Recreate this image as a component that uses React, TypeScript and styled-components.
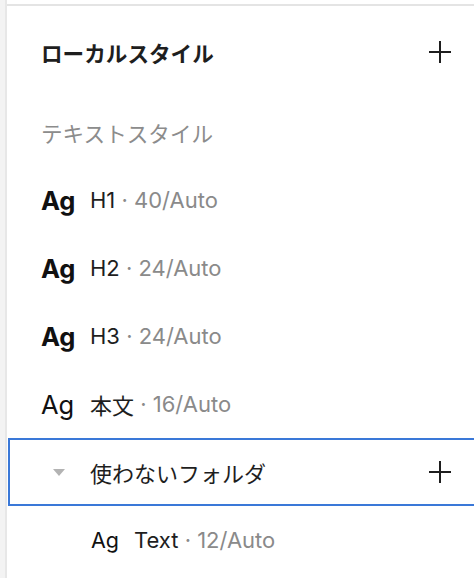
import React from 'react';
import styled, { createGlobalStyle } from 'styled-components';

const GlobalStyle = createGlobalStyle`
  html, body {
    margin: 0;
    padding: 0;
    background: #ffffff;
  }
  body {
    font-family: Inter, "Noto Sans CJK JP", sans-serif;
    color: #1a1a1a;
  }
`;

const Frame = styled.div`
  display: flex;
  width: 474px;
  height: 578px;
  overflow: hidden;
`;

const SideStrip = styled.div`
  width: 5px;
  flex-shrink: 0;
  background: #f3f3f3;
  border-right: 2px solid #e7e7e7;
`;

const Panel = styled.div`
  flex: 1;
  margin-top: 4px;
  border-top: 2px solid #e4e4e4;
  display: flex;
  flex-direction: column;
`;

const Header = styled.div`
  height: 92px;
  display: flex;
  align-items: center;
  justify-content: space-between;
  padding: 0 22px 0 34px;
`;

const Title = styled.div`
  font-family: "Noto Sans CJK JP", sans-serif;
  font-size: 21.6px;
  font-weight: 700;
  color: #1e1e1e;
`;

const PlusButton = styled.div`
  width: 24px;
  height: 24px;
  display: flex;
  align-items: center;
  justify-content: center;
  color: #1e1e1e;
`;

const Row = styled.div<{ $indent?: number }>`
  height: 68px;
  display: flex;
  align-items: center;
  padding-left: ${(p) => p.$indent ?? 34}px;
`;

const SectionLabel = styled.div`
  font-family: "Noto Sans CJK JP", sans-serif;
  font-size: 21.6px;
  color: #8c8c8c;
`;

const Sample = styled.span<{ $bold?: boolean; $size?: number; $width?: number }>`
  font-family: Inter, "Noto Sans CJK JP", sans-serif;
  font-size: ${(p) => p.$size ?? 25.5}px;
  font-weight: ${(p) => (p.$bold ? 700 : 400)};
  color: #111;
  width: ${(p) => p.$width ?? 49}px;
  letter-spacing: -0.2px;
`;

const StyleName = styled.span`
  font-family: Inter, "Noto Sans CJK JP", sans-serif;
  font-size: 22px;
  color: #1e1e1e;
`;

const StyleMeta = styled.span`
  font-family: Inter, sans-serif;
  font-size: 22px;
  color: #8a8a8a;
`;

const FolderRow = styled.div`
  height: 64px;
  margin-left: 1px;
  border: 2px solid #3a78d8;
  border-right: none;
  display: flex;
  align-items: center;
  justify-content: space-between;
  padding: 0 22px 0 43px;
`;

const FolderLeft = styled.div`
  display: flex;
  align-items: center;
  gap: 25px;
`;

const Caret = styled.div`
  width: 0;
  height: 0;
  border-left: 6px solid transparent;
  border-right: 6px solid transparent;
  border-top: 7px solid #b3b3b3;
`;

const FolderName = styled.div`
  font-family: "Noto Sans CJK JP", sans-serif;
  font-size: 22px;
  color: #1e1e1e;
`;

const Plus = () => (
  <svg width="22" height="22" viewBox="0 0 22 22">
    <path d="M11 0v22M0 11h22" stroke="currentColor" strokeWidth="2" fill="none" />
  </svg>
);

const styles = [
  { name: 'H1', meta: '40/Auto', bold: true },
  { name: 'H2', meta: '24/Auto', bold: true },
  { name: 'H3', meta: '24/Auto', bold: true },
  { name: '本文', meta: '16/Auto', bold: false },
];

export default function App() {
  return (
    <>
      <GlobalStyle />
      <Frame>
        <SideStrip />
        <Panel>
          <Header>
            <Title>ローカルスタイル</Title>
            <PlusButton>
              <Plus />
            </PlusButton>
          </Header>
          <Row>
            <SectionLabel>テキストスタイル</SectionLabel>
          </Row>
          {styles.map((s) => (
            <Row key={s.name}>
              <Sample $bold={s.bold}>Ag</Sample>
              <StyleName>{s.name}</StyleName>
              <StyleMeta>&nbsp;· {s.meta}</StyleMeta>
            </Row>
          ))}
          <FolderRow>
            <FolderLeft>
              <Caret />
              <FolderName>使わないフォルダ</FolderName>
            </FolderLeft>
            <PlusButton>
              <Plus />
            </PlusButton>
          </FolderRow>
          <Row $indent={84}>
            <Sample $size={21.5} $width={43}>Ag</Sample>
            <StyleName>Text</StyleName>
            <StyleMeta>&nbsp;· 12/Auto</StyleMeta>
          </Row>
        </Panel>
      </Frame>
    </>
  );
}
